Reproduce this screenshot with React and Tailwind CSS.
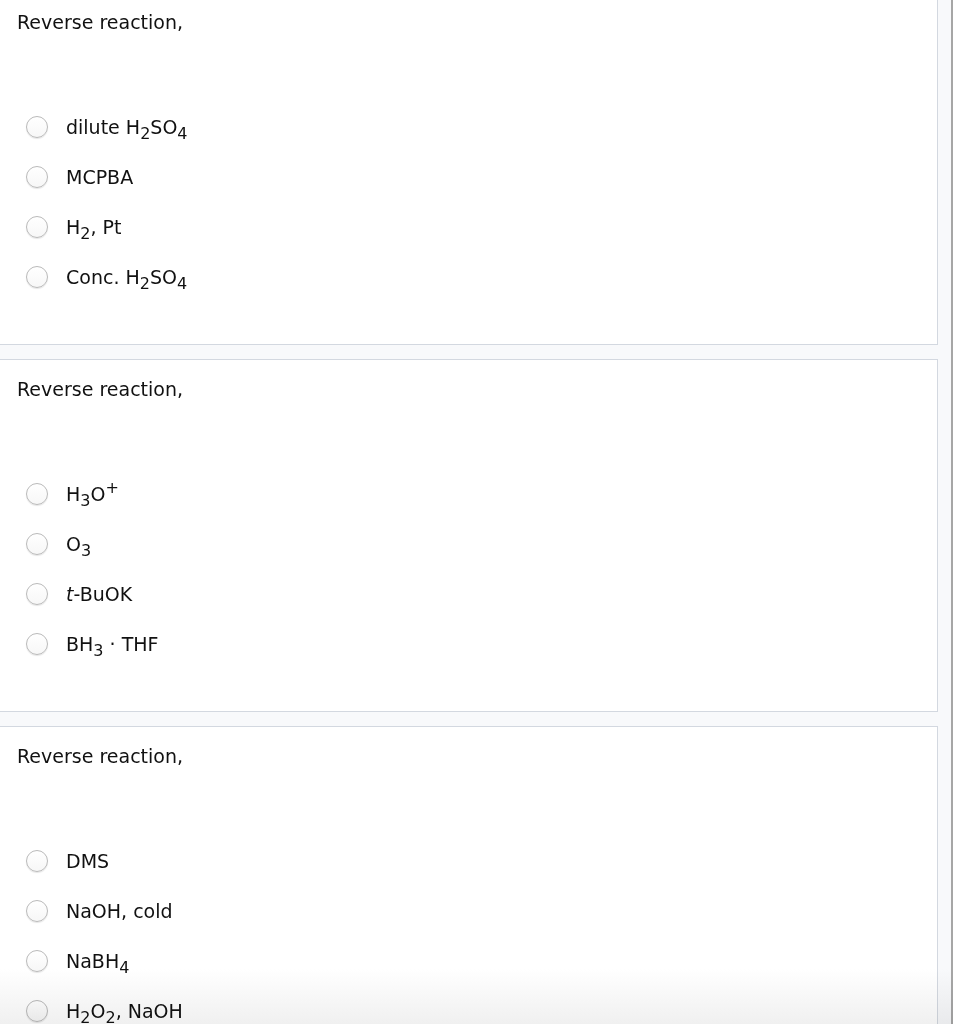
import React from "react";

const Sub = ({ children }) => (
  <span className="relative top-[5px] text-[16px] leading-none">{children}</span>
);
const Sup = ({ children }) => (
  <span className="relative -top-[8px] text-[16px] leading-none">{children}</span>
);

function Radio() {
  return (
    <span className="block w-[22px] h-[22px] rounded-full border border-[#bababa] bg-gradient-to-b from-white to-[#f7f7f7] shadow-[0_1px_1px_rgba(0,0,0,0.1)] shrink-0" />
  );
}

function Panel({ options, className = "" }) {
  return (
    <div className={"bg-white border-t border-b border-r border-[#d3d8e0] pt-[17px] pb-[42px] " + className}>
      <div className="pl-[17px] text-[19px] leading-[24px] text-[#111111]">Reverse reaction,</div>
      <div className="mt-[68px] flex flex-col">
        {options.map((o, i) => (
          <div key={i} className="h-[50px] flex items-center pl-[26px]">
            <Radio />
            <span className="ml-[18px] text-[19px] leading-[24px] text-[#111111] whitespace-nowrap">{o}</span>
          </div>
        ))}
      </div>
    </div>
  );
}

export default function App() {
  const p1 = [
    <>dilute H<Sub>2</Sub>SO<Sub>4</Sub></>,
    <>MCPBA</>,
    <>H<Sub>2</Sub>, Pt</>,
    <>Conc. H<Sub>2</Sub>SO<Sub>4</Sub></>,
  ];
  const p2 = [
    <>H<Sub>3</Sub>O<Sup>+</Sup></>,
    <>O<Sub>3</Sub></>,
    <><i>t</i>-BuOK</>,
    <>BH<Sub>3</Sub> · THF</>,
  ];
  const p3 = [
    <>DMS</>,
    <>NaOH, cold</>,
    <>NaBH<Sub>4</Sub></>,
    <>H<Sub>2</Sub>O<Sub>2</Sub>, NaOH</>,
  ];
  return (
    <div
      className="relative h-[1024px] w-[953px] overflow-hidden bg-[#f8f9fb] flex"
      style={{ fontFamily: '"DejaVu Sans", Verdana, sans-serif' }}
    >
      <div className="w-[951px] flex flex-col">
        <div className="-mt-[8px] w-[938px] flex flex-col gap-[14px]">
          <Panel options={p1} />
          <Panel options={p2} />
          <Panel options={p3} />
        </div>
      </div>
      <div className="w-[2px] bg-[#a6a6a6]" />
      <div className="pointer-events-none absolute left-0 right-0 bottom-0 h-[55px] mix-blend-multiply bg-gradient-to-b from-white to-[#f0f0f0]" />
    </div>
  );
}
